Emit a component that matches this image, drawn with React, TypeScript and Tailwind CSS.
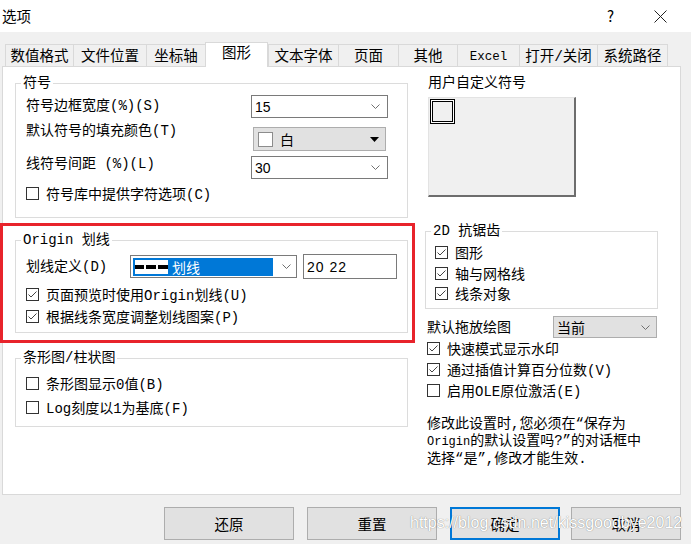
import React from "react";

const mono = "font-['Liberation_Mono','Noto_Sans_CJK_SC',monospace]";
const sans = "font-['Noto_Sans_CJK_SC','Liberation_Sans',sans-serif]";

const tabs: [string, number][] = [
  ["数值格式", 68],
  ["文件位置", 73],
  ["坐标轴", 59],
  ["图形", 63],
  ["文本字体", 70],
  ["页面", 60],
  ["其他", 59],
  ["Excel", 62],
  ["打开/关闭", 78],
  ["系统路径", 71],
];

function Chevron() {
  return (
    <svg width="9" height="5" viewBox="0 0 9 5" className="shrink-0">
      <polyline points="0.5,0.5 4.5,4.5 8.5,0.5" fill="none" stroke="#707070" strokeWidth="1" />
    </svg>
  );
}

function Check({ checked }: { checked?: boolean }) {
  return (
    <span className="flex h-[13px] w-[13px] shrink-0 items-center justify-center border border-[#333] bg-white">
      {checked && (
        <svg width="11" height="11" viewBox="0 0 11 11">
          <polyline points="1.5,5.5 4,8 9.5,2.5" fill="none" stroke="#444" strokeWidth="1" />
        </svg>
      )}
    </span>
  );
}

function CheckRow({ checked, label, className = "" }: { checked?: boolean; label: React.ReactNode; className?: string }) {
  return (
    <div className={`flex h-[16px] items-start gap-[7px] ${className}`}>
      <Check checked={checked} />
      <span className="whitespace-nowrap leading-[16px]">{label}</span>
    </div>
  );
}

function Combo({ value, className = "" }: { value: string; className?: string }) {
  return (
    <div className={`flex items-center justify-between border border-[#7a7a7a] bg-white pl-[3px] pr-[7px] ${className}`}>
      <span className="font-['Liberation_Sans',sans-serif] text-[14px] leading-[16px]">{value}</span>
      <Chevron />
    </div>
  );
}

function Group({ label, className = "", children }: { label: string; className?: string; children: React.ReactNode }) {
  return (
    <fieldset className={`border border-[#dcdcdc] ${className}`}>
      <legend className="ml-[5px] px-[2px] leading-[16px]">{label}</legend>
      {children}
    </fieldset>
  );
}

export default function App() {
  return (
    <div className={`relative h-[544px] w-[691px] overflow-hidden bg-[#f0f0f0] text-[14px] text-black ${mono}`}>
      {/* title bar */}
      <div className={`flex h-[32px] items-center bg-white ${sans}`}>
        <span className="ml-[2px] text-[14.5px] leading-[16px]">选项</span>
        <span className="ml-auto mr-[40px] text-[15px] leading-[16px]">?</span>
        <svg width="13" height="13" viewBox="0 0 13 13" className="mr-[24px]">
          <path d="M0.5 0.5 L12.5 12.5 M12.5 0.5 L0.5 12.5" stroke="#222" strokeWidth="1" />
        </svg>
      </div>

      {/* tabs */}
      <div className="flex h-[34px] items-end pl-[5px]">
        {tabs.map(([t, w]) =>
          t === "图形" ? (
            <div
              key={t}
              style={{ width: w }}
              className="relative z-10 -mb-px flex h-[25px] justify-center border-x border-t border-[#d9d9d9] bg-white pt-[3px] text-[14.5px] leading-[16px]"
            >
              {t}
            </div>
          ) : (
            <div
              key={t}
              style={{ width: w }}
              className="flex h-[22px] justify-center border-l border-t border-[#d9d9d9] pt-[4px] text-[14.5px] leading-[16px] last:border-r"
            >
              {t === "Excel" ? <span className="text-[12.5px]">Excel</span> : t}
            </div>
          )
        )}
      </div>

      {/* panel */}
      <div className="ml-[2px] flex h-[429px] w-[679px] border border-[#d9d9d9] bg-white">
        {/* left column */}
        <div className="ml-[12px] flex w-[393px] flex-col">
          <Group label="符号" className="mt-[8px]">
            <div className="pb-[14px] pl-[10px] pt-[4px]">
              <div className="flex h-[23px]">
                <span className="w-[225px] pt-[3px] leading-[16px]">符号边框宽度(%)(S)</span>
                <Combo value="15" className="h-[23px] w-[137px]" />
              </div>
              <div className="mt-[5px] flex h-[28px]">
                <span className="w-[227px] leading-[16px]">默认符号的填充颜色(T)</span>
                <div className={`mt-[4px] flex h-[24px] w-[133px] items-center border border-[#adadad] bg-[#e1e1e1] pl-[4px] pr-[6px] ${sans}`}>
                  <span className="h-[15px] w-[15px] border border-[#8c8c8c] bg-white" />
                  <span className="ml-[7px] leading-[16px]">白</span>
                  <svg width="9" height="5" viewBox="0 0 9 5" className="ml-auto">
                    <polygon points="0,0 9,0 4.5,5" fill="#000" />
                  </svg>
                </div>
              </div>
              <div className="mt-[4px] flex h-[24px]">
                <span className="w-[225px] pt-[1px] leading-[16px]">线符号间距 (%)(L)</span>
                <Combo value="30" className="mt-[1px] h-[23px] w-[137px]" />
              </div>
              <CheckRow className="mt-[8px]" label="符号库中提供字符选项(C)" />
            </div>
          </Group>

          <Group label="Origin 划线" className="mt-[14px]">
            <div className="pb-[6px] pl-[10px] pt-[6px]">
              <div className="flex h-[25px]">
                <span className="w-[104px] pt-[5px] leading-[16px]">划线定义(D)</span>
                <div className="mt-[1px] flex h-[23px] w-[167px] items-center border border-[#7a7a7a] bg-white pl-[2px] pr-[5px]">
                  <div className="flex h-[18px] w-[140px] items-center bg-[#0078d7] pl-[2px]">
                    <div className="flex h-[14px] w-[33px] items-center gap-[2px] bg-white">
                      <span className="h-[4px] w-[9px] bg-black" />
                      <span className="h-[4px] w-[10px] bg-black" />
                      <span className="h-[4px] w-[10px] bg-black" />
                    </div>
                    <span className={`ml-[4px] leading-[16px] text-white ${sans}`}>划线</span>
                  </div>
                  <span className="ml-auto">
                    <Chevron />
                  </span>
                </div>
                <div className="ml-[6px] flex h-[25px] w-[94px] items-center border border-[#7a7a7a] bg-white pl-[3px]">
                  <span className="font-['Liberation_Sans',sans-serif] leading-[16px] tracking-[1px]">20 22</span>
                </div>
              </div>
              <CheckRow checked className="mt-[9px]" label="页面预览时使用Origin划线(U)" />
              <CheckRow checked className="mt-[6px]" label="根据线条宽度调整划线图案(P)" />
            </div>
          </Group>

          <Group label="条形图/柱状图" className="mt-[17px]">
            <div className="pb-[9px] pl-[10px] pt-[11px]">
              <CheckRow label="条形图显示0值(B)" />
              <CheckRow className="mt-[8px]" label="Log刻度以1为基底(F)" />
            </div>
          </Group>
        </div>

        {/* right column */}
        <div className="ml-[17px] flex w-[233px] flex-col">
          <span className="ml-[3px] mt-[8px] leading-[16px]">用户自定义符号</span>
          <div className="ml-[3px] mt-[6px] h-[100px] w-[148px] border-b-2 border-l border-r-2 border-t border-b-[#6d6d6d] border-l-[#e3e3e3] border-r-[#6d6d6d] border-t-[#e3e3e3] bg-[#f0f0f0] pl-[1px] pt-[1px]">
            <div className="h-[25px] w-[25px] border border-black bg-white p-[1px]">
              <div className="h-full w-full border border-black bg-[#f0f0f0]" />
            </div>
          </div>

          <Group label="2D 抗锯齿" className="mt-[26px]">
            <div className="pb-[5px] pl-[9px] pt-[7px]">
              <CheckRow checked label="图形" />
              <CheckRow checked className="mt-[5px]" label="轴与网格线" />
              <CheckRow checked className="mt-[4px]" label="线条对象" />
            </div>
          </Group>

          <div className="ml-[2px] mt-[7px] flex h-[22px]">
            <span className="w-[126px] pt-[4px] leading-[16px]">默认拖放绘图</span>
            <div className={`flex h-[22px] w-[104px] items-center justify-between border border-[#adadad] bg-[#e1e1e1] pl-[3px] pr-[6px] ${sans}`}>
              <span className="leading-[16px]">当前</span>
              <Chevron />
            </div>
          </div>
          <CheckRow checked className="ml-[2px] mt-[4px]" label="快速模式显示水印" />
          <CheckRow checked className="ml-[2px] mt-[5px]" label="通过插值计算百分位数(V)" />
          <CheckRow className="ml-[2px] mt-[5px]" label="启用OLE原位激活(E)" />

          <p className="ml-[2px] mt-[16px] leading-[17px]">
            修改此设置时,您必须在“保存为
            <br />
            <span className="text-[12px]">Origin</span>的默认设置吗?”的对话框中
            <br />
            选择“是”,修改才能生效.
          </p>
        </div>
      </div>

      {/* buttons */}
      <div className={`mt-[12px] flex ${sans}`}>
        <button className="ml-[164px] h-[33px] w-[130px] border border-[#adadad] bg-[#e1e1e1] text-[14.5px]">还原</button>
        <button className="ml-[13px] h-[33px] w-[130px] border border-[#adadad] bg-[#e1e1e1] text-[14.5px]">重置</button>
        <button className="ml-[13px] h-[33px] w-[110px] border-2 border-[#0078d7] bg-[#e1e1e1] text-[14.5px]">确定</button>
        <button className="ml-[11px] h-[33px] w-[110px] border border-[#adadad] bg-[#e1e1e1] text-[14.5px]">取消</button>
      </div>

      {/* annotation + watermark overlays */}
      <div className="pointer-events-none absolute left-0 top-[223px] h-[120px] w-[415px] border-[3px] border-[#e8232b]" />
      <span className="pointer-events-none absolute left-[410px] top-[513px] whitespace-nowrap font-['Liberation_Sans',sans-serif] text-[16px] leading-[20px] text-white [text-shadow:0_0_1px_rgba(0,0,0,0.55)]">
        https://blog.csdn.net/kissgoodbye2012
      </span>
    </div>
  );
}
